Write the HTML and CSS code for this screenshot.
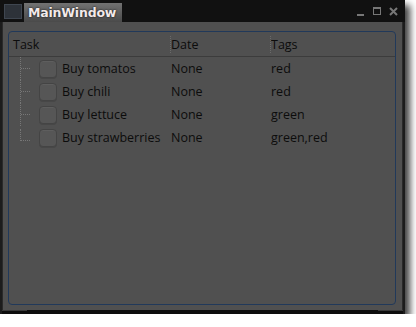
FILE: index.html
```html
<!DOCTYPE html>
<html lang="en">
<head>
    <meta charset="UTF-8">
    <title>MainWindow</title>
    <link rel="stylesheet" href="styles.css">
</head>
<body>
    <div class="window">
        <div class="titlebar">
            <div class="app-icon"></div>
            <div class="title-tab">MainWindow</div>
            <div class="controls">
                <span class="ctl min"></span>
                <span class="ctl max"></span>
                <span class="ctl close">
                    <svg width="9" height="9" viewBox="0 0 9 9"><path d="M1 1 L8 8 M8 1 L1 8" stroke="#777" stroke-width="2"/></svg>
                </span>
            </div>
        </div>
        <div class="client">
            <div class="tree">
                <div class="header">
                    <div class="col task">Task</div>
                    <div class="col date">Date</div>
                    <div class="col tags">Tags</div>
                </div>
                <div class="row">
                    <div class="col task"><span class="branch"></span><span class="check"></span>Buy tomatos</div>
                    <div class="col date">None</div>
                    <div class="col tags">red</div>
                </div>
                <div class="row">
                    <div class="col task"><span class="branch"></span><span class="check"></span>Buy chili</div>
                    <div class="col date">None</div>
                    <div class="col tags">red</div>
                </div>
                <div class="row">
                    <div class="col task"><span class="branch"></span><span class="check"></span>Buy lettuce</div>
                    <div class="col date">None</div>
                    <div class="col tags">green</div>
                </div>
                <div class="row last">
                    <div class="col task"><span class="branch"></span><span class="check"></span>Buy strawberries</div>
                    <div class="col date">None</div>
                    <div class="col tags">green,red</div>
                </div>
            </div>
        </div>
        <div class="bottom-bar">
            <span class="grip"></span>
            <span class="grip"></span>
        </div>
    </div>
</body>
</html>
```

FILE: styles.css
```css
html, body {
    margin: 0;
    background: #ffffff;
    font-family: "Open Sans", "DejaVu Sans", sans-serif;
}

.window {
    width: 405px;
    height: 314px;
    background: #1c1c1c;
    box-shadow: 5px 5px 7px rgba(0, 0, 0, 0.75);
    display: flex;
    flex-direction: column;
}

.titlebar {
    height: 22px;
    background: #111111;
    display: flex;
    align-items: center;
    padding-left: 4px;
}

.app-icon {
    width: 16px;
    height: 13px;
    background: #2d3239;
    border: 1px solid #3f4650;
    margin-right: 2px;
}

.title-tab {
    height: 19px;
    margin-top: 2px;
    padding: 0 6px 0 4px;
    background: linear-gradient(#727272, #4a4a4a);
    color: #f3eaea;
    font-family: "DejaVu Sans", sans-serif;
    font-weight: bold;
    font-size: 12.5px;
    letter-spacing: -0.2px;
    line-height: 19px;
    text-shadow: 0 0 2px #000;
}

.controls {
    margin-left: auto;
    display: flex;
    align-items: center;
    gap: 8px;
    padding-right: 7px;
}

.ctl {
    width: 9px;
    height: 9px;
    position: relative;
}

.ctl.min::after {
    content: "";
    position: absolute;
    left: 1px;
    bottom: 0;
    width: 7px;
    height: 2px;
    background: #777;
}

.ctl.max {
    box-sizing: border-box;
    border: 1px solid #777;
    border-top-width: 2px;
    width: 8px;
    height: 8px;
}

.ctl.close svg {
    display: block;
}

.client {
    flex: 1;
    margin: 0 2px;
    background: #505050;
    border-left: 1px solid #2a2a2a;
    border-right: 1px solid #2a2a2a;
    padding: 9px 6px 5px 5px;
    display: flex;
}

.tree {
    flex: 1;
    border: 1px solid #21395a;
    border-radius: 4px;
    color: #0c0c0c;
    font-size: 12.5px;
}

.header, .row {
    display: flex;
    align-items: center;
}

.header {
    height: 24px;
    border-bottom: 1px solid #3c3c3c;
}

.row {
    height: 23px;
}

.col.task {
    width: 158px;
    padding-left: 4px;
    display: flex;
    align-items: center;
}

.col.date {
    width: 100px;
}

.header .col.date, .header .col.tags {
    border-left: 1px dotted #6a6a6a;
    margin-left: -1px;
    padding-left: 0;
}

.branch {
    width: 10px;
    height: 23px;
    margin-left: 7px;
    margin-right: 8px;
    border-left: 1px dotted #777;
    position: relative;
}

.branch::after {
    content: "";
    position: absolute;
    left: 0;
    top: 11px;
    width: 9px;
    border-top: 1px dotted #777;
}

.row.last .branch {
    height: 12px;
    align-self: flex-start;
}

.check {
    width: 18px;
    height: 18px;
    box-sizing: border-box;
    border: 1px solid #444;
    border-radius: 4px;
    background: #565656;
    box-shadow: inset 0 1px 0 #5e5e5e, 0 1px 0 #474747;
    margin-right: 5px;
}

.bottom-bar {
    height: 4px;
    margin: 0 2px 0;
    background: #0d0d0d;
    display: flex;
    justify-content: space-between;
}

.grip {
    width: 25px;
    height: 1px;
    background: #3a3a3a;
}
```
